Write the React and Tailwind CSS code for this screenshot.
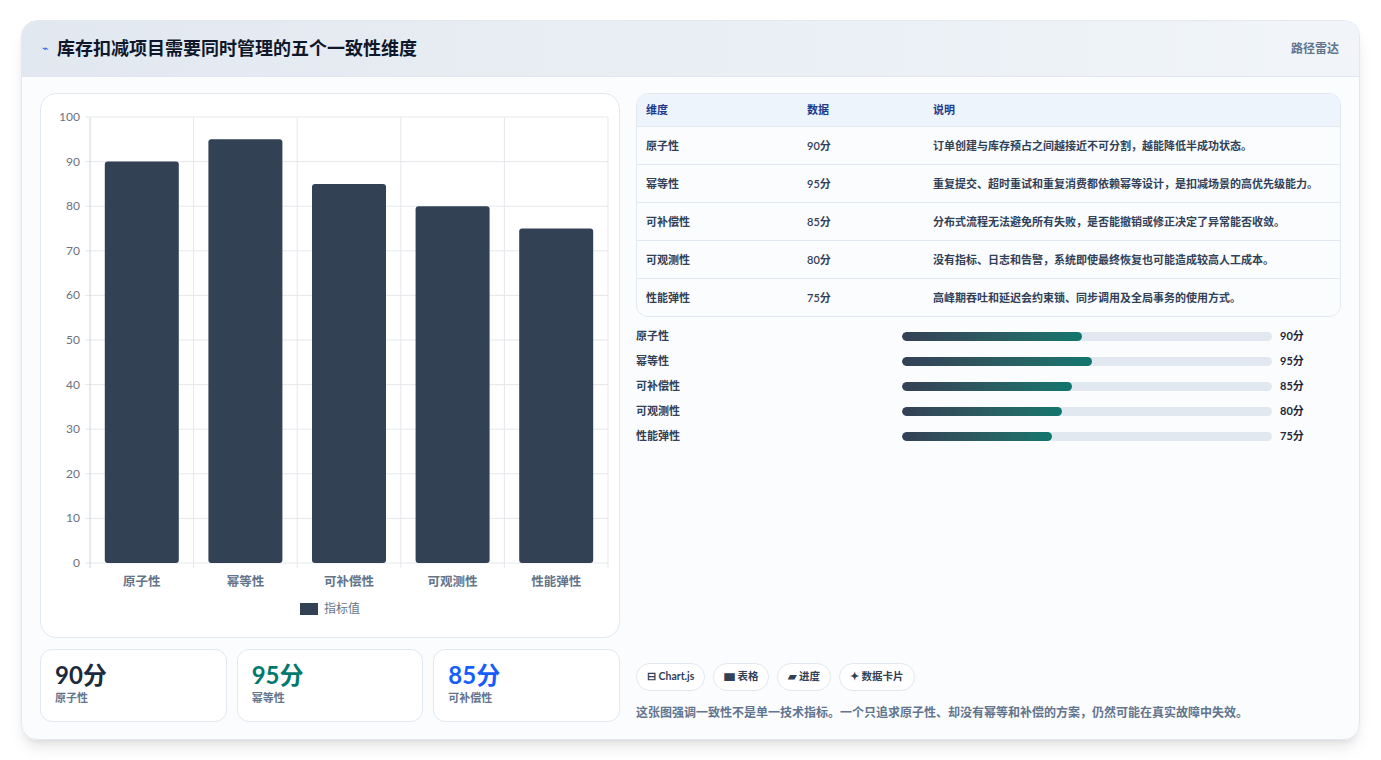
import React from "react";

const rows = [
  ["原子性", 90, "订单创建与库存预占之间越接近不可分割，越能降低半成功状态。"],
  ["幂等性", 95, "重复提交、超时重试和重复消费都依赖幂等设计，是扣减场景的高优先级能力。"],
  ["可补偿性", 85, "分布式流程无法避免所有失败，是否能撤销或修正决定了异常能否收敛。"],
  ["可观测性", 80, "没有指标、日志和告警，系统即使最终恢复也可能造成较高人工成本。"],
  ["性能弹性", 75, "高峰期吞吐和延迟会约束锁、同步调用及全局事务的使用方式。"],
];

function Chart() {
  const L = 49, R = 567, T = 23, B = 469;
  const cw = (R - L) / 5;
  const y = (v) => B - ((B - T) * v) / 100;
  return (
    <svg width="578" height="542" className="block">
      {[0, 10, 20, 30, 40, 50, 60, 70, 80, 90, 100].map((v) => (
        <g key={v}>
          <line x1={L - 5} x2={R} y1={y(v)} y2={y(v)} stroke="#e5e7eb" />
          <text x={L - 10} y={y(v) + 4} textAnchor="end" fontSize="12" fill="#6b7280">{v}</text>
        </g>
      ))}
      {[0, 1, 2, 3, 4, 5].map((i) => (
        <line key={i} x1={L + i * cw} x2={L + i * cw} y1={T} y2={B + 5} stroke={i === 0 ? "#d1d5db" : "#e5e7eb"} />
      ))}
      {rows.map(([n, v], i) => (
        <g key={n}>
          <rect x={L + i * cw + 14.8} y={y(v)} width={74} height={B - y(v)} rx="3" fill="#334155" />
          <text x={L + i * cw + cw / 2} y={492} textAnchor="middle" fontSize="12.5" fontWeight="600" fill="#64748b">{n}</text>
        </g>
      ))}
      <rect x={259} y={509} width={18} height={12} fill="#334155" />
      <text x={283} y={519} fontSize="12" fill="#64748b">指标值</text>
    </svg>
  );
}

export default function App() {
  return (
    <div className="w-[1381px] h-[760px] bg-white pt-5 px-[21px]" style={{ fontFamily: "Lato, 'Noto Sans CJK SC', sans-serif" }}>
      <div className="h-[720px] rounded-2xl border border-slate-200 bg-slate-50/60 shadow-lg overflow-hidden flex flex-col">
        <div className="h-[56px] shrink-0 flex items-center justify-between px-5 bg-gradient-to-r from-[#e2e8f0] to-[#f1f5f9] border-b border-slate-200">
          <div className="flex items-center gap-2">
            <span className="text-[11px] text-blue-600">⌁</span>
            <span className="text-[18px] font-bold text-slate-900">库存扣减项目需要同时管理的五个一致性维度</span>
          </div>
          <span className="text-[12px] font-semibold text-slate-500">路径雷达</span>
        </div>
        <div className="flex gap-4 px-[18px] pt-4">
          <div className="w-[580px] flex flex-col gap-[11px]">
            <div className="h-[545px] rounded-2xl border border-slate-200 bg-white">
              <Chart />
            </div>
            <div className="flex gap-[10px]">
              {[["90分", "原子性", "text-slate-800"], ["95分", "幂等性", "text-teal-700"], ["85分", "可补偿性", "text-blue-600"]].map(([a, b, c]) => (
                <div key={b} className="w-[187px] h-[73px] rounded-xl border border-slate-200 bg-white px-[14px] pt-[10px]">
                  <div className={`text-[24px] font-bold leading-[30px] ${c}`}>{a}</div>
                  <div className="text-[11px] font-semibold text-slate-500">{b}</div>
                </div>
              ))}
            </div>
          </div>
          <div className="w-[708px] flex flex-col">
            <div className="rounded-xl border border-slate-200 bg-white overflow-hidden">
              <div className="flex h-[33px] items-center bg-[#eef4fc] border-b border-slate-200 text-[11px] font-semibold text-[#1e3a8a]">
                <div className="w-[170px] pl-[9px]">维度</div>
                <div className="w-[126px]">数据</div>
                <div>说明</div>
              </div>
              {rows.map(([n, v, d], i) => (
                <div key={n} className={`flex py-[10px] text-[11px] font-semibold text-slate-700 leading-[17px] ${i ? "border-t border-slate-200" : ""} bg-slate-50/60`}>
                  <div className="w-[170px] pl-[9px] shrink-0">{n}</div>
                  <div className="w-[126px] shrink-0">{v}分</div>
                  <div className="pr-4">{d}</div>
                </div>
              ))}
            </div>
            <div className="mt-[11px] flex flex-col gap-[8px]">
              {rows.map(([n, v]) => (
                <div key={n} className="flex items-center h-[17px] text-[11px] font-semibold text-slate-700">
                  <div className="w-[266px]">{n}</div>
                  <div className="w-[370px] h-[9px] rounded-full bg-slate-200 overflow-hidden">
                    <div className="h-full rounded-full bg-gradient-to-r from-[#334155] to-[#0f766e]" style={{ width: v * 2 }} />
                  </div>
                  <div className="ml-2 font-bold text-slate-800">{v}分</div>
                </div>
              ))}
            </div>
            <div className="mt-auto" />
            <div className="mt-[213px] flex gap-2">
              {["⊟ Chart.js", "▆ 表格", "▰ 进度", "✦ 数据卡片"].map((t) => (
                <span key={t} className="h-[28px] px-[10px] flex items-center rounded-full border border-slate-200 bg-white text-[10.5px] font-bold text-slate-700">{t}</span>
              ))}
            </div>
            <p className="mt-[13px] text-[12px] font-semibold text-slate-500">这张图强调一致性不是单一技术指标。一个只追求原子性、却没有幂等和补偿的方案，仍然可能在真实故障中失效。</p>
          </div>
        </div>
      </div>
    </div>
  );
}
